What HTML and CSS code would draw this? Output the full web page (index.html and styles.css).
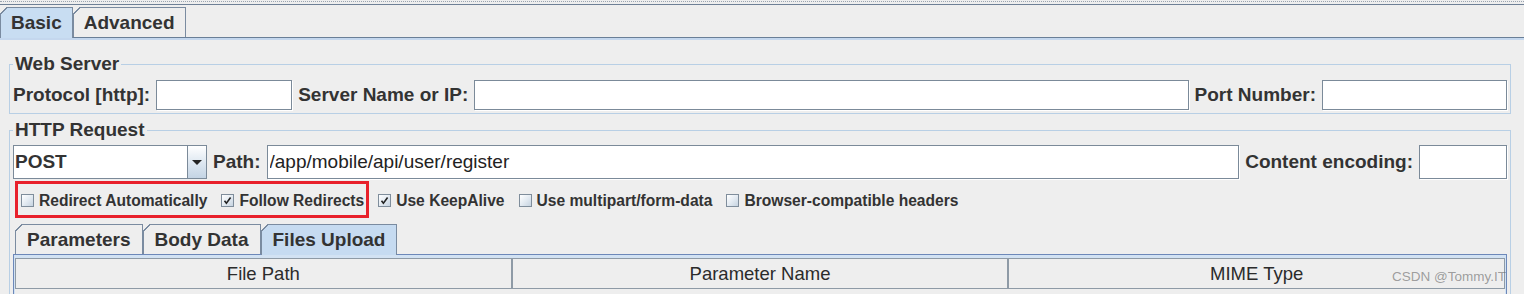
FILE: index.html
```html
<!DOCTYPE html>
<html lang="en">
<head>
    <meta charset="UTF-8">
    <title>HTTP Request</title>
    <link rel="stylesheet" href="styles.css">
</head>
<body>
    <div class="topbar"></div>

    <div class="tabs">
        <div class="tab active">Basic</div>
        <div class="tab">Advanced</div>
    </div>

    <div class="panel">
        <fieldset class="group">
            <legend>Web Server</legend>
            <div class="row">
                <span class="label">Protocol [http]:</span>
                <input class="field protocol" type="text">
                <span class="label">Server Name or IP:</span>
                <input class="field grow" type="text">
                <span class="label">Port Number:</span>
                <input class="field port" type="text">
            </div>
        </fieldset>

        <fieldset class="group http">
            <legend>HTTP Request</legend>
            <div class="row tall">
                <div class="combo">
                    <span class="combo-value">POST</span>
                    <span class="combo-btn">
                        <svg width="10" height="5" viewBox="0 0 10 5"><polygon points="0,0 10,0 5,5" fill="#222"/></svg>
                    </span>
                </div>
                <span class="label">Path:</span>
                <input class="field grow" type="text" value="/app/mobile/api/user/register">
                <span class="label">Content encoding:</span>
                <input class="field encoding" type="text">
            </div>

            <div class="checks">
                <div class="highlight">
                    <span class="check"><span class="box"></span>Redirect Automatically</span>
                    <span class="check"><span class="box"><svg width="9" height="9" viewBox="0 0 9 9"><polyline points="1.5,4.8 3.4,7.2 7.6,1.6" fill="none" stroke="#222" stroke-width="1.6"/></svg></span>Follow Redirects</span>
                </div>
                <span class="check"><span class="box"><svg width="9" height="9" viewBox="0 0 9 9"><polyline points="1.5,4.8 3.4,7.2 7.6,1.6" fill="none" stroke="#222" stroke-width="1.6"/></svg></span>Use KeepAlive</span>
                <span class="check"><span class="box"></span>Use multipart/form-data</span>
                <span class="check"><span class="box"></span>Browser-compatible headers</span>
            </div>

            <div class="subtabs">
                <div class="tab">Parameters</div>
                <div class="tab">Body Data</div>
                <div class="tab active">Files Upload</div>
            </div>

            <div class="table">
                <div class="thead">
                    <div class="th">File Path</div>
                    <div class="th">Parameter Name</div>
                    <div class="th">MIME Type</div>
                </div>
                <div class="tbody"></div>
            </div>
        </fieldset>
    </div>

    <div class="watermark">CSDN @Tommy.IT</div>
</body>
</html>
```

FILE: styles.css
```css
* {
    box-sizing: border-box;
}
body {
    margin: 0;
    background: #eeeeee;
    font-family: "Liberation Sans", Arial, sans-serif;
    color: #333333;
    overflow: hidden;
}
.topbar {
    margin-top: 1px;
    height: 4px;
    border-top: 1px dotted #9aa4b0;
    border-bottom: 1px solid #6e8096;
}

/* tabs */
.tabs {
    display: flex;
    align-items: flex-end;
    padding-top: 2px;
    border-bottom: 1px solid #6a7f97;
}
.tab {
    position: relative;
    height: 30px;
    padding: 0 10px;
    border: 1px solid #7a8ba0;
    border-bottom: none;
    font-size: 19px;
    font-weight: bold;
    line-height: 29px;
    white-space: nowrap;
}
.tab::before {
    content: "";
    position: absolute;
    left: -1px;
    top: -1px;
    width: 7px;
    height: 7px;
    background: linear-gradient(135deg, #eeeeee 0 44%, #7a8ba0 44% 58%, transparent 58%);
}
.tab.active {
    height: 31px;
    margin-bottom: -1px;
    background: #c8ddf2;
}
.panel {
    border-top: 2px solid #c4d7ee;
    padding: 13px 13px 0 9px;
}

/* groups */
.group {
    margin: 0;
    padding: 0 3px 3px 3px;
    border: 1px solid #b8cfe5;
    min-width: 0;
}
.group legend {
    padding: 0 2px;
    font-size: 19px;
    font-weight: bold;
    line-height: 22px;
}
.group.http {
    margin-top: 5px;
}
.row {
    display: flex;
    align-items: center;
    gap: 6px;
    height: 30px;
    margin-top: 5px;
}
.row.tall {
    height: 34px;
    margin-top: 4px;
}
.label {
    font-size: 19px;
    font-weight: bold;
    white-space: nowrap;
}
.field {
    height: 100%;
    margin: 0;
    padding: 0 2px;
    border: 1px solid #7b8a99;
    background: #ffffff;
    box-shadow: 1px 1px 0 #ffffff;
    font-family: "Liberation Sans", Arial, sans-serif;
    font-size: 19px;
    color: #222222;
    outline: none;
}
.grow {
    flex: 1;
    min-width: 0;
}
.protocol {
    width: 136px;
}
.port {
    width: 185px;
}
.encoding {
    width: 88px;
}

/* combo box */
.combo {
    display: flex;
    width: 194px;
    height: 100%;
    border: 1px solid #7b8a99;
    background: #ffffff;
}
.combo-value {
    flex: 1;
    padding-left: 1px;
    font-size: 19px;
    font-weight: bold;
    line-height: 31px;
}
.combo-btn {
    display: flex;
    align-items: center;
    justify-content: center;
    width: 19px;
    border-left: 1px solid #7b8a99;
    background: linear-gradient(180deg, #ffffff 0%, #dce6f0 55%, #c4d4e4 100%);
}

/* checkboxes */
.checks {
    display: flex;
    align-items: center;
    gap: 14px;
    margin-top: 2px;
    padding-left: 2px;
}
.highlight {
    display: flex;
    align-items: center;
    gap: 14px;
    height: 37px;
    padding: 2px 2px 0 3px;
    margin-right: -5px;
    border: 3px solid #e8212b;
}
.checks > .check {
    padding-top: 2px;
}
.check {
    display: flex;
    align-items: center;
    gap: 5px;
    font-size: 15.6px;
    font-weight: bold;
    white-space: nowrap;
}
.box {
    display: flex;
    align-items: center;
    justify-content: center;
    width: 13px;
    height: 13px;
    border: 1px solid #7f8d9b;
    background: linear-gradient(135deg, #ffffff 0%, #e4ebf2 50%, #c6d3e0 100%);
}

/* inner tabs + table */
.subtabs {
    display: flex;
    align-items: flex-end;
    margin-top: 6px;
    padding-left: 2px;
    border-bottom: 1px solid #6d88b9;
}
.subtabs .tab {
    padding: 0 11px;
}
.subtabs .tab.active {
    background: #c6dbf1;
}
.table {
    padding: 3px 1px 0 1px;
    border-left: 1px solid #6d88b9;
    border-right: 1px solid #6d88b9;
    background: #d2e2f3;
}
.thead {
    display: flex;
    height: 31px;
}
.th {
    flex: 1;
    border: 1px solid #8e9aa6;
    background: #eeeeee;
    font-size: 18.5px;
    line-height: 29px;
    text-align: center;
    color: #2b2b2b;
}
.tbody {
    height: 80px;
    background: #eeeeee;
}
.watermark {
    position: absolute;
    top: 269px;
    right: 18px;
    font-size: 13.5px;
    color: rgba(110, 110, 110, 0.65);
}
```
